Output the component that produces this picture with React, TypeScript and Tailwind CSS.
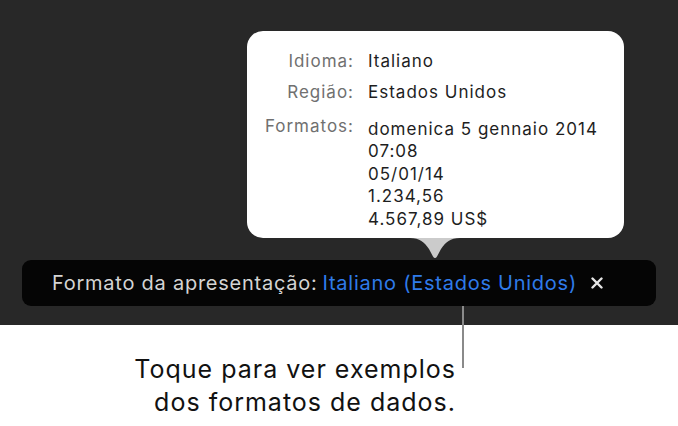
import React from "react";

const font = { fontFamily: "Inter, 'Noto Sans', sans-serif" };

export default function App() {
  return (
    <div className="relative w-[678px] h-[426px] bg-white overflow-hidden" style={font}>
      <div className="relative h-[325px] bg-[#282828] pt-[260px] px-[22px]">
        <div className="flex h-[46px] items-center rounded-[9px] bg-[#050505] pl-[30px] text-[20px] tracking-[0.75px] text-[#d4d4d4]">
          <span>Formato da apresentação:</span>
          <span className="ml-[5px] text-[#2f7bea]">Italiano (Estados Unidos)</span>
          <svg className="ml-[14px]" width="12" height="12" viewBox="0 0 12 12">
            <path d="M1.5 1.5 L10.5 10.5 M10.5 1.5 L1.5 10.5" stroke="#e6e6e6" strokeWidth="2.4" strokeLinecap="round" />
          </svg>
        </div>

        <div className="absolute left-[247px] top-[31px] h-[207px] w-[377px] rounded-[16px] bg-white pt-[19px] text-[17px] leading-[22px] tracking-[1px]">
          <div className="grid grid-cols-[107px_1fr] gap-x-[14px]">
            <div className="text-right text-[#707070]">Idioma:</div>
            <div className="text-[#1e1e1e]">Italiano</div>
            <div className="mt-[9px] text-right text-[#707070]">Região:</div>
            <div className="mt-[9px] text-[#1e1e1e]">Estados Unidos</div>
            <div className="mt-[12px] text-right text-[#707070]">Formatos:</div>
            <div className="mt-[15px] flex flex-col text-[#1e1e1e] leading-[22.4px]">
              <span>domenica 5 gennaio 2014</span>
              <span>07:08</span>
              <span>05/01/14</span>
              <span>1.234,56</span>
              <span>4.567,89 US$</span>
            </div>
          </div>
        </div>

        <svg className="absolute left-[410px] top-[238px]" width="50" height="22" viewBox="0 0 50 22">
          <path d="M0 0 C10 0 14 4 19 11 L23 18.5 Q25 21.5 27 18.5 L31 11 C36 4 40 0 50 0 Z" fill="#cbcbcb" />
        </svg>
      </div>

      <div className="absolute left-[462px] top-[306px] h-[62px] w-[1.5px] bg-[#8a8a8a]" />

      <div className="mt-[28px] pr-[222px] text-right text-[25px] leading-[33px] tracking-[1px] text-[#111]">
        <div>Toque para ver exemplos</div>
        <div>dos formatos de dados.</div>
      </div>
    </div>
  );
}
